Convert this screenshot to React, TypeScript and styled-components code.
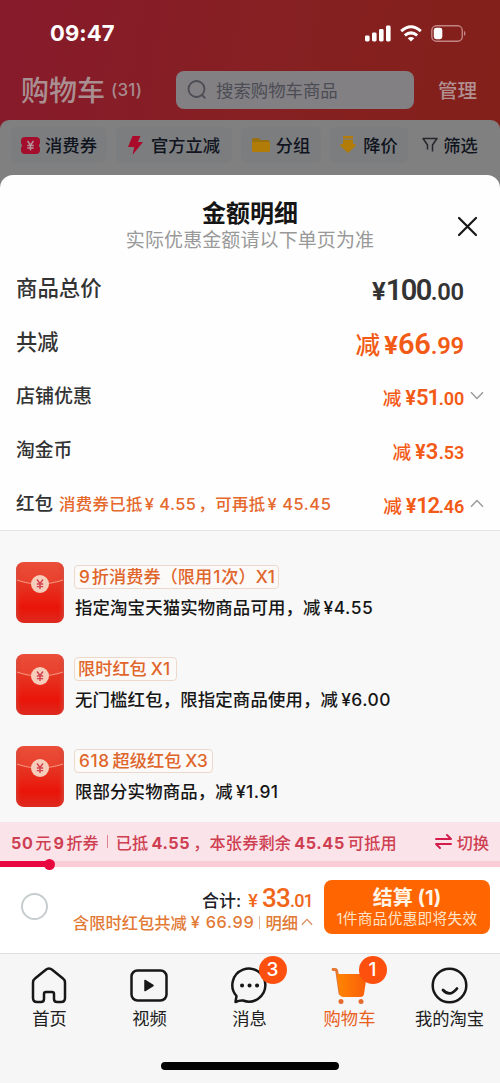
import React from 'react';
import styled, { createGlobalStyle } from 'styled-components';

const GlobalStyle = createGlobalStyle`
  * { box-sizing: border-box; }
  body { margin: 0; font-family: Inter, "Noto Sans CJK SC", sans-serif; color: #111; }
  svg { display: block; flex: none; }
`;

const Screen = styled.div`
  width: 500px;
  height: 1083px;
  overflow: hidden;
  display: flex;
  flex-direction: column;
  background: linear-gradient(100deg, #871a2b 0%, #862023 50%, #832019 100%) top / 100% 190px no-repeat;
`;

const StatusBar = styled.div`
  height: 60px;
  padding: 6px 34px 0 50px;
  display: flex;
  align-items: center;
  justify-content: space-between;
  color: #fff;
`;
const Time = styled.span`font-size: 22px; font-weight: 700; letter-spacing: 0.1px;`;
const StatusIcons = styled.div`display: flex; align-items: center; gap: 9px;`;

const CartHeader = styled.div`
  height: 60px;
  padding: 0 23px 0 21px;
  display: flex;
  align-items: center;
  color: #a99496;
`;
const CartTitle = styled.span`
  width: 90px;
  padding-bottom: 3px;
  font-size: 28px;
  font-weight: 500;
  white-space: nowrap;
  color: #a98f91;
`;
const CartCount = styled.span`font-size: 17px; font-weight: 500; width: 65px; letter-spacing: 0.2px; color: #a68c8f;`;
const Search = styled.div`
  width: 238px;
  height: 38px;
  border-radius: 8px;
  background: #828083;
  color: #4c4c55;
  display: flex;
  align-items: center;
  gap: 9px;
  padding-left: 11px;
  font-size: 17.4px;
`;
const SearchText = styled.span`padding-bottom: 2px;`;
const Manage = styled.span`margin-left: 24px; padding-bottom: 2px; font-size: 19.5px; font-weight: 500; color: #b09090;`;

const Filters = styled.div`
  height: 75px;
  margin-bottom: -20px;
  padding: 7px 12px 0 11px;
  border-radius: 9px 9px 0 0;
  background: #808080;
  display: flex;
  gap: 9px;
`;
const Chip = styled.div<{ $w: number; $plain?: boolean; $gap?: number }>`
  width: ${p => p.$w}px;
  height: 36px;
  border-radius: 6px;
  background: ${p => (p.$plain ? 'transparent' : '#7b7d7f')};
  display: flex;
  align-items: center;
  justify-content: center;
  gap: ${p => p.$gap ?? 5}px;
  font-size: 17.3px;
  font-weight: 500;
  white-space: nowrap;
  color: #10141e;
`;
const ChipText = styled.span`padding-bottom: 2px;`;

const Sheet = styled.section`
  position: relative;
  height: 647px;
  flex: none;
  border-radius: 13px 13px 0 0;
  background: #fefefe;
  overflow: hidden;
`;
const SheetHeader = styled.header`
  height: 85px;
  padding-top: 24px;
  display: flex;
  flex-direction: column;
  align-items: center;
`;
const SheetTitle = styled.h1`margin: 0; font-size: 24px; line-height: 29px; font-weight: 700; color: #151515;`;
const SheetNote = styled.p`margin: 0; font-size: 19px; line-height: 25px; color: #999; letter-spacing: 0.1px;`;
const Close = styled.button`
  position: absolute;
  right: 22px;
  top: 41px;
  padding: 0;
  border: 0;
  background: none;
`;

const Row = styled.div`
  height: 54px;
  padding: 0 15px 0 16px;
  display: flex;
  align-items: center;
`;
const RowLabel = styled.span<{ $size: number }>`
  padding-bottom: 2px;
  font-size: ${p => p.$size}px;
  font-weight: 500;
  color: #333;
`;
const RowHint = styled.span`
  margin-left: 6px;
  font-size: 16.4px;
  font-weight: 500;
  color: #e5682c;
  letter-spacing: 0.35px;
  white-space: pre;
`;
const Amount = styled.span<{ $size: number; $dark?: boolean; $tight?: number }>`
  margin-left: auto;
  padding-top: 6px;
  display: flex;
  align-items: baseline;
  line-height: 1;
  font-family: Roboto, "Noto Sans CJK SC", sans-serif;
  font-size: ${p => p.$size}px;
  letter-spacing: ${p => -(p.$tight ?? 0.5)}px;
  font-weight: 600;
  color: ${p => (p.$dark ? '#333' : '#f25a16')};
`;
const Cut = styled.span`font-size: 0.85em; font-weight: 500; margin-right: 4px; letter-spacing: 0;`;
const Yen = styled.span`font-size: 0.88em; font-weight: 700; letter-spacing: 0;`;
const Cents = styled.span`font-size: 0.82em; letter-spacing: -0.2px;`;
const ArrowSlot = styled.span`width: 21px; padding: 2px 0 0 6px; display: flex;`;

const Details = styled.div`
  height: 292px;
  border-top: 1px solid #e4e4e4;
  padding: 31px 16px 0;
  background: #f8f8f8;
  display: flex;
  flex-direction: column;
  gap: 31px;
`;
const Coupon = styled.div`height: 61px; display: flex; gap: 10px;`;
const CouponText = styled.div`
  display: flex;
  flex-direction: column;
  align-items: flex-start;
  padding-top: 3px;
`;
const Tag = styled.span`
  height: 24px;
  padding: 0 4px 0 3px;
  border: 1px solid #ecd9cc;
  border-radius: 4px;
  background: #fbfaf8;
  color: #e0652b;
  display: flex;
  align-items: center;
  font-size: 17.2px;
  line-height: 20px;
  font-weight: 500;
  white-space: nowrap;
`;
const CouponDesc = styled.span`
  margin-top: 6px;
  padding-left: 1px;
  font-size: 17.4px;
  line-height: 25px;
  letter-spacing: 0.15px;
  font-weight: 500;
  white-space: nowrap;
  color: #161616;
`;
const Num = styled.span<{ $l?: number; $r?: number; $ls?: number }>`
  margin-left: ${p => p.$l ?? 2}px;
  margin-right: ${p => p.$r ?? 2}px;
  letter-spacing: ${p => p.$ls ?? 0}px;
`;

const VoucherBar = styled.div`
  height: 39px;
  flex: none;
  padding: 0 11px;
  background: #fae4ea;
  color: #cf3f52;
  display: flex;
  align-items: center;
  font-size: 16.1px;
  font-weight: 500;
  white-space: nowrap;
  b { font-weight: 700; margin: 0 3px; letter-spacing: 0.6px; }
`;
const VoucherName = styled.span`
  b { margin: 0 2px; }
  b:first-child { margin-left: 0; }
`;
const VoucherUse = styled.span`font-size: 16.2px; letter-spacing: 0.15px;`;
const Separator = styled.i<{ $m: number; $c: string }>`
  width: 1px;
  height: 13px;
  margin: 0 ${p => p.$m}px;
  background: ${p => p.$c};
`;
const Switch = styled.span`margin-left: auto; display: flex; align-items: center; gap: 5px;`;
const Track = styled.div`
  position: relative;
  height: 6px;
  flex: none;
  background: #f9ccd6;
  display: flex;
  align-items: center;
`;
const Fill = styled.div`width: 50px; height: 6px; background: #e8083f; display: flex; align-items: center; justify-content: flex-end;`;
const Knob = styled.i`width: 11px; height: 11px; flex: none; margin-right: -5px; border-radius: 50%; background: #e8083f;`;

const Checkout = styled.div`
  height: 86px;
  flex: none;
  padding: 0 10px 0 21px;
  background: #fff;
  display: flex;
  align-items: center;
`;
const Radio = styled.i`width: 27px; height: 27px; margin-bottom: 7px; border: 2px solid #c6cdcf; border-radius: 50%;`;
const Totals = styled.div`
  margin-left: auto;
  padding-bottom: 3px;
  display: flex;
  flex-direction: column;
  align-items: flex-end;
`;
const TotalLine = styled.div`
  height: 27px;
  display: flex;
  align-items: baseline;
  font-size: 17px;
  font-weight: 500;
  color: #1d2228;
`;
const TotalPrice = styled.span`
  margin-left: 7px;
  display: flex;
  align-items: baseline;
  color: #f0661a;
  font-family: Roboto, "Noto Sans CJK SC", sans-serif;
  font-size: 26px;
  line-height: 28px;
  font-weight: 500;
  letter-spacing: -0.8px;
`;
const TotalYen = styled.span`margin-right: 5px; font-size: 18px;`;
const TotalCents = styled.span`font-size: 18px;`;
const SavedLine = styled.div`
  height: 22px;
  display: flex;
  align-items: center;
  font-size: 16.3px;
  font-weight: 500;
  color: #e27a36;
  white-space: pre;
`;
const DetailLink = styled.span`display: flex; align-items: center; gap: 3px;`;
const PayButton = styled.button`
  width: 166px;
  height: 54px;
  margin: 0 0 6px 11px;
  padding: 1px 0 0;
  border: 0;
  border-radius: 8px;
  background: #ff6500;
  color: #fff4e6;
  font-family: inherit;
  display: flex;
  flex-direction: column;
  align-items: center;
  justify-content: center;
  white-space: nowrap;
`;
const PayTitle = styled.span`font-size: 20px; line-height: 24px; font-weight: 700;`;
const PayNote = styled.span`font-size: 14.7px; line-height: 19px; letter-spacing: 0.3px; color: #ffe3c8;`;

const TabArea = styled.nav`height: 130px; flex: none; background: #f6f6f6; border-top: 1px solid #dedede;`;
const Tabs = styled.div`height: 108px; padding-top: 13px; display: flex;`;
const Tab = styled.div<{ $active?: boolean }>`
  width: 100px;
  padding-right: 1px;
  display: flex;
  flex-direction: column;
  align-items: center;
  font-size: 17.3px;
  line-height: 26px;
  color: ${p => (p.$active ? '#e8601c' : '#202020')};
`;
const IconBox = styled.div`position: relative; height: 39px; margin-left: -1px;`;
const Badge = styled.span`
  position: absolute;
  left: 28px;
  top: -11px;
  width: 28px;
  height: 28px;
  border-radius: 50%;
  background: #fd500f;
  color: #fff;
  font-size: 19px;
  line-height: 28px;
  font-weight: 500;
  text-align: center;
`;
const HomeIndicator = styled.div`width: 178px; height: 8px; margin: 0 auto; border-radius: 4px; background: #000;`;

const Chevron = ({ up, color = '#999', size = 14 }: { up?: boolean; color?: string; size?: number }) => (
  <svg width={size} height={size * 0.65} viewBox="0 0 14 9" fill="none" stroke={color} strokeWidth="1.4">
    <path d={up ? 'M1 7.8 7 1.5l6 6.3' : 'M1 1.2l6 6.3 6-6.3'} />
  </svg>
);

const Envelope = ({ id }: { id: string }) => (
  <svg width="48" height="61" viewBox="0 0 48 61">
    <defs>
      <linearGradient id={`${id}-body`} x2="0" y2="1">
        <stop stopColor="#e84a37" /><stop offset=".42" stopColor="#e6301f" /><stop offset=".75" stopColor="#ea1408" /><stop offset="1" stopColor="#dd2a1f" />
      </linearGradient>
      <linearGradient id={`${id}-edge`}>
        <stop stopColor="#cf5148" stopOpacity=".6" /><stop offset=".12" stopColor="#e03020" stopOpacity="0" />
        <stop offset=".88" stopColor="#e03020" stopOpacity="0" /><stop offset="1" stopColor="#cf5148" stopOpacity=".7" />
      </linearGradient>
    </defs>
    <rect width="48" height="61" rx="8" fill={`url(#${id}-body)`} />
    <path d="M0 19V8a8 8 0 0 1 8-8h32a8 8 0 0 1 8 8v11Q24 25 0 19" fill="#ee5540" opacity=".35" />
    <rect width="48" height="61" rx="8" fill={`url(#${id}-edge)`} />
    <path d="M1 18q22 8 46 0" fill="none" stroke="#f3937c" strokeWidth="1.3" />
    <circle cx="24" cy="22" r="9" fill="#f6cdbb" />
    <path d="m21 17.5 3 4 3-4M24 21.5V27M20.8 22h6.4M20.8 24.6h6.4" fill="none" stroke="#d6404c" strokeWidth="1.4" />
  </svg>
);

const SignalIcon = () => (
  <svg width="26" height="17" viewBox="0 0 26 17" fill="#fff">
    <rect x="0" y="10.5" width="4.6" height="6" rx="1.4" /><rect x="7" y="7.5" width="4.6" height="9" rx="1.4" />
    <rect x="14" y="4" width="4.6" height="12.5" rx="1.4" /><rect x="21" y="0.5" width="4.6" height="16" rx="1.4" />
  </svg>
);
const WifiIcon = () => (
  <svg width="22" height="17" viewBox="0 0 22 17" fill="none" stroke="#fff" strokeWidth="3">
    <path d="M1.2 6.2Q11-2.6 20.8 6.2M4.8 10.4q6.2-5 12.400 0" /><path d="m11 16.5-3.300-3.300q3.300-2.400 6.600 0Z" fill="#fff" stroke="none" />
  </svg>
);
const BatteryIcon = () => (
  <svg width="35" height="17" viewBox="0 0 35 17">
    <rect x=".8" y=".8" width="30.5" height="15.4" rx="4.6" fill="none" stroke="#c08584" strokeWidth="1.4" />
    <rect x="2.8" y="2.8" width="8.5" height="11.4" rx="2.4" fill="#fff" /><path d="M33 5.8q3 2.7 0 5.4Z" fill="#c08584" />
  </svg>
);

const coupons = [
  { id: 'voucher', tag: <><Num $l={1} $r={2}>9</Num>折消费券（限用<Num $l={1} $r={1}>1</Num>次）<Num $l={0} $r={-1}>X1</Num></>, desc: <>指定淘宝天猫实物商品可用，减<Num $l={3} $ls={0.5}>¥4.55</Num></> },
  { id: 'limited', tag: <>限时红包<Num $l={4} $r={1} $ls={0.3}>X1</Num></>, desc: <>无门槛红包，限指定商品使用，减<Num $l={3} $ls={0.5}>¥6.00</Num></> },
  { id: 'super', tag: <><Num $l={1} $r={3} $ls={0.6}>618</Num>超级红包<Num $l={4} $r={0}>X3</Num></>, desc: <>限部分实物商品，减<Num $l={3} $ls={0.5}>¥1.91</Num></> },
];

const stroke = { fill: 'none', stroke: '#171717', strokeWidth: 2.5, strokeLinecap: 'round' as const, strokeLinejoin: 'round' as const };

export default function App() {
  return (
    <Screen>
      <GlobalStyle />
      <StatusBar>
        <Time>09:47</Time>
        <StatusIcons><SignalIcon /><WifiIcon /><BatteryIcon /></StatusIcons>
      </StatusBar>
      <CartHeader>
        <CartTitle>购物车</CartTitle>
        <CartCount>(31)</CartCount>
        <Search>
          <svg width="20" height="20" viewBox="0 0 20 20" fill="none" stroke="#4c4c55" strokeWidth="1.8" strokeLinecap="round">
            <circle cx="9.5" cy="9" r="8" /><path d="m15.5 15.5 2.3 2.3" />
          </svg>
          <SearchText>搜索购物车商品</SearchText>
        </Search>
        <Manage>管理</Manage>
      </CartHeader>
      <Filters>
        <Chip $w={96} $gap={5}>
          <svg width="19" height="17" viewBox="0 0 19 17">
            <path d="M4 0h11a4 4 0 0 1 4 4v2.2q-2 2.3 0 4.6V13a4 4 0 0 1-4 4H4a4 4 0 0 1-4-4v-2.2q2-2.3 0-4.6V4a4 4 0 0 1 4-4" fill="#a40d2c" />
            <path d="m6.5 4 3 4 3-4M9.5 8v5.5M6.3 8.5h6.4M6.3 11h6.4" fill="none" stroke="#b5959b" strokeWidth="1.4" />
          </svg>
          <ChipText>消费券</ChipText>
        </Chip>
        <Chip $w={116} $gap={8}>
          <svg width="15" height="19" viewBox="0 0 15 19"><path d="M4.5 0h8L9.8 6H15L4.5 19l1.7-8H0Z" fill="#ab0b2b" /></svg>
          <ChipText>官方立减</ChipText>
        </Chip>
        <Chip $w={80} $gap={6}>
          <svg width="18" height="14" viewBox="0 0 18 14">
            <path d="M1.5 0h5l2 2H16a1.5 1.5 0 0 1 1.5 1.5V5H0V1.5A1.5 1.5 0 0 1 1.5 0" fill="#9a7010" />
            <path d="M0 4h16.5A1.5 1.5 0 0 1 18 5.5v7a1.5 1.5 0 0 1-1.5 1.5h-15A1.5 1.5 0 0 1 0 12.5Z" fill="#b27c09" />
          </svg>
          <ChipText>分组</ChipText>
        </Chip>
        <Chip $w={78} $gap={7}>
          <svg width="16" height="18" viewBox="0 0 16 18" fill="#b27c09"><path d="M3 0h10v2.5H3zM3 3.7h10V8h2.5v2L8 17 .5 10V8H3Z" /></svg>
          <ChipText>降价</ChipText>
        </Chip>
        <Chip $w={66} $gap={5} $plain>
          <svg width="16" height="16" viewBox="0 0 16 16" fill="none" stroke="#25272c" strokeWidth="1.5" strokeLinejoin="round"><path d="M5.500 12.500V8L1 1.500h14L10.500 8v6.500" /></svg>
          <ChipText>筛选</ChipText>
        </Chip>
      </Filters>

      <Sheet>
        <SheetHeader>
          <SheetTitle>金额明细</SheetTitle>
          <SheetNote>实际优惠金额请以下单页为准</SheetNote>
        </SheetHeader>
        <Close aria-label="关闭">
          <svg width="21" height="21" viewBox="0 0 21 21" fill="none" stroke="#171717" strokeWidth="2.2" strokeLinecap="round"><path d="m2 2 17 17M19 2 2 19" /></svg>
        </Close>
        <Row>
          <RowLabel $size={21.4}>商品总价</RowLabel>
          <Amount $size={29} $dark $tight={1.6}><Yen>¥</Yen>100<Cents>.00</Cents></Amount><ArrowSlot />
        </Row>
        <Row>
          <RowLabel $size={21.2}>共减</RowLabel>
          <Amount $size={29} $tight={0.2}><Cut>减</Cut><Yen>¥</Yen>66<Cents>.99</Cents></Amount><ArrowSlot />
        </Row>
        <Row>
          <RowLabel $size={19}>店铺优惠</RowLabel>
          <Amount $size={22} $tight={1.1}><Cut>减</Cut><Yen>¥</Yen>51<Cents>.00</Cents></Amount><ArrowSlot><Chevron /></ArrowSlot>
        </Row>
        <Row>
          <RowLabel $size={18.8}>淘金币</RowLabel>
          <Amount $size={22} $tight={-0.6}><Cut>减</Cut><Yen>¥</Yen>3<Cents>.53</Cents></Amount><ArrowSlot />
        </Row>
        <Row>
          <RowLabel $size={18.5}>红包</RowLabel>
          <RowHint>消费券已抵<Num $ls={0.5}>¥ 4.55</Num>，可再抵<Num $ls={0.6}>¥ 45.45</Num></RowHint>
          <Amount $size={22} $tight={1.3}><Cut>减</Cut><Yen>¥</Yen>12<Cents>.46</Cents></Amount><ArrowSlot><Chevron up /></ArrowSlot>
        </Row>
        <Details>
          {coupons.map(c => (
            <Coupon key={c.id}>
              <Envelope id={c.id} />
              <CouponText><Tag><span>{c.tag}</span></Tag><CouponDesc>{c.desc}</CouponDesc></CouponText>
            </Coupon>
          ))}
        </Details>
      </Sheet>

      <VoucherBar>
        <VoucherName><b>50</b>元<b>9</b>折券</VoucherName>
        <Separator $m={8} $c="#df8392" />
        <VoucherUse>已抵<b>4.55</b>，本张券剩余<b>45.45</b>可抵用</VoucherUse>
        <Switch>
          <svg width="17" height="15" viewBox="0 0 17 15" fill="none" stroke="#d51b4b" strokeWidth="1.9" strokeLinecap="round" strokeLinejoin="round"><path d="M1 5h15l-4-4M16 10H1l4 4" /></svg>
          切换
        </Switch>
      </VoucherBar>
      <Track><Fill><Knob /></Fill></Track>

      <Checkout>
        <Radio />
        <Totals>
          <TotalLine>合计:<TotalPrice><TotalYen>¥</TotalYen>33<TotalCents>.01</TotalCents></TotalPrice></TotalLine>
          <SavedLine>
            含限时红包共减<Num $l={4} $r={0} $ls={0.7}>¥ 66.99</Num>
            <Separator $m={5} $c="#e8b99b" />
            <DetailLink>明细<Chevron up color="#d98a5b" size={12} /></DetailLink>
          </SavedLine>
        </Totals>
        <PayButton>
          <PayTitle>结算 (1)</PayTitle>
          <PayNote>1件商品优惠即将失效</PayNote>
        </PayButton>
      </Checkout>

      <TabArea>
        <Tabs>
          <Tab>
            <IconBox><svg width="36" height="37" viewBox="0 0 36 37" {...stroke}>
              <path d="M4 11.5 14.5 3q3.5-3 7 0L32 11.5q2 1.500 2 4V31q0 4-4 4h-4q-3 0-3-3v-5q0-2-2-2h-6q-2 0-2 2v5q0 3-3 3H6q-4 0-4-4V15.500q0-2.500 2-4Z" />
            </svg></IconBox>首页
          </Tab>
          <Tab>
            <IconBox><svg width="38" height="37" viewBox="0 0 38 37" {...stroke}>
              <rect x="1.5" y="3.5" width="35" height="30" rx="6" /><path d="m15 13.500 8 5-8 5Z" fill="#171717" strokeWidth="1.5" />
            </svg></IconBox>视频
          </Tab>
          <Tab>
            <IconBox><svg width="37" height="37" viewBox="0 0 37 37" {...stroke}>
              <path d="M5.500 29A16.500 16.500 0 1 1 12 33.500q-3-.5-7.500 1.500.500-3 1-6Z" /><path d="M11 18.500h.1M18.500 18.500h.1M26 18.500h.1" strokeWidth="4" />
            </svg><Badge>3</Badge></IconBox>消息
          </Tab>
          <Tab $active>
            <IconBox><svg width="37" height="37" viewBox="0 0 37 37">
              <defs><linearGradient id="cart"><stop stopColor="#ff8500" /><stop offset="1" stopColor="#f95d0c" /></linearGradient></defs>
              <path d="M2 2.500h2q1.500 0 1.800 2L9 26.500" fill="none" stroke="#e27832" strokeWidth="2.8" strokeLinecap="round" />
              <path d="M6 7h30l-3 20q-.5 3-3.500 3h-17Q9 30 8.600 27Z" fill="url(#cart)" />
              <circle cx="10" cy="34.5" r="2.5" fill="#e66b2e" /><circle cx="30" cy="34.5" r="2.5" fill="#e66b2e" />
            </svg><Badge>1</Badge></IconBox>购物车
          </Tab>
          <Tab>
            <IconBox><svg width="37" height="37" viewBox="0 0 37 37" {...stroke}>
              <circle cx="18.5" cy="18.5" r="16.8" /><path d="M12 23q7 7.500 14-1.500" strokeWidth="2.8" />
            </svg></IconBox>我的淘宝
          </Tab>
        </Tabs>
        <HomeIndicator />
      </TabArea>
    </Screen>
  );
}
